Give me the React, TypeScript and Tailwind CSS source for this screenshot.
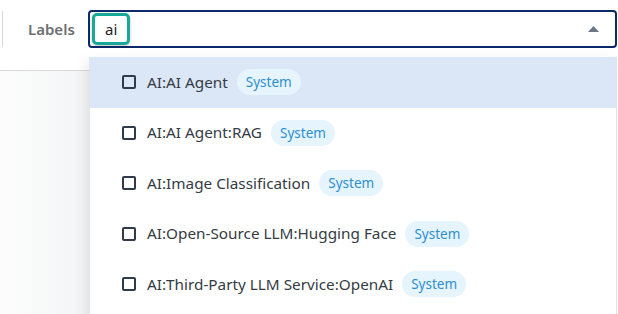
import { useState } from "react"

const options = [
    "AI:AI Agent",
    "AI:AI Agent:RAG",
    "AI:Image Classification",
    "AI:Open-Source LLM:Hugging Face",
    "AI:Third-Party LLM Service:OpenAI",
]

function Option({ label, active }: { label: string; active?: boolean }) {
    return (
        <div className={`flex items-center h-[50.5px] pl-[32px] ${active ? "bg-[#dbe7f6]" : "bg-white"}`}>
            <span className="w-[14px] h-[14px] rounded-[2px] border-2 border-[#2f3b4b] shrink-0" />
            <span className="ml-[11px] text-[15.3px] text-[#353b44]">{label}</span>
            <span className="ml-[9px] h-[26px] px-[9px] flex items-center rounded-full bg-[#e6f4fd] text-[13.5px] text-[#2c8fd2]">
                System
            </span>
        </div>
    )
}

export default function App() {
    const [query] = useState("ai")
    return (
        <div className="relative w-[618px] h-[314px] overflow-hidden bg-white font-['Noto_Sans',sans-serif]">
            <div className="h-[71px] w-[90px] border-b border-[#d6d8db] bg-white" />
            <div className="absolute left-0 top-[71px] w-[90px] h-[243px] bg-gradient-to-r from-[#fdfdfd] to-[#f3f4f5]" />

            {/* filter bar */}
            <div className="absolute left-0 top-[10px] right-0 flex items-center h-[38px]">
                <div className="w-px h-[36px] bg-[#d8d8d8] ml-[2px]" />
                <span className="ml-[25px] w-[49px] text-[15px] font-semibold text-[#6d6f73]">Labels</span>
                <div className="ml-[11px] flex-1 mr-[1px] h-[38px] rounded-[4px] border-2 border-[#0c2a6b] flex items-center pr-[16px]">
                    <div className="ml-[2px] h-[32px] px-[10px] flex items-center rounded-[5px] border-[3px] border-[#17a89a] shadow-[0_1px_3px_rgba(0,0,0,0.25)]">
                        <span className="text-[15px] text-[#1f2328]">{query}</span>
                    </div>
                    <svg className="ml-auto" width="11" height="6" viewBox="0 0 11 6">
                        <path d="M0 6 L5.5 0 L11 6 Z" fill="#6b7684" />
                    </svg>
                </div>
            </div>

            {/* dropdown */}
            <div className="absolute left-[89px] top-[57px] w-[528px] h-[270px] bg-white border-x border-[#e2e4e7] shadow-[-4px_4px_12px_rgba(0,0,0,0.08)]">
                {options.map((o, i) => (
                    <Option key={o} label={o} active={i === 0} />
                ))}
            </div>
        </div>
    )
}
